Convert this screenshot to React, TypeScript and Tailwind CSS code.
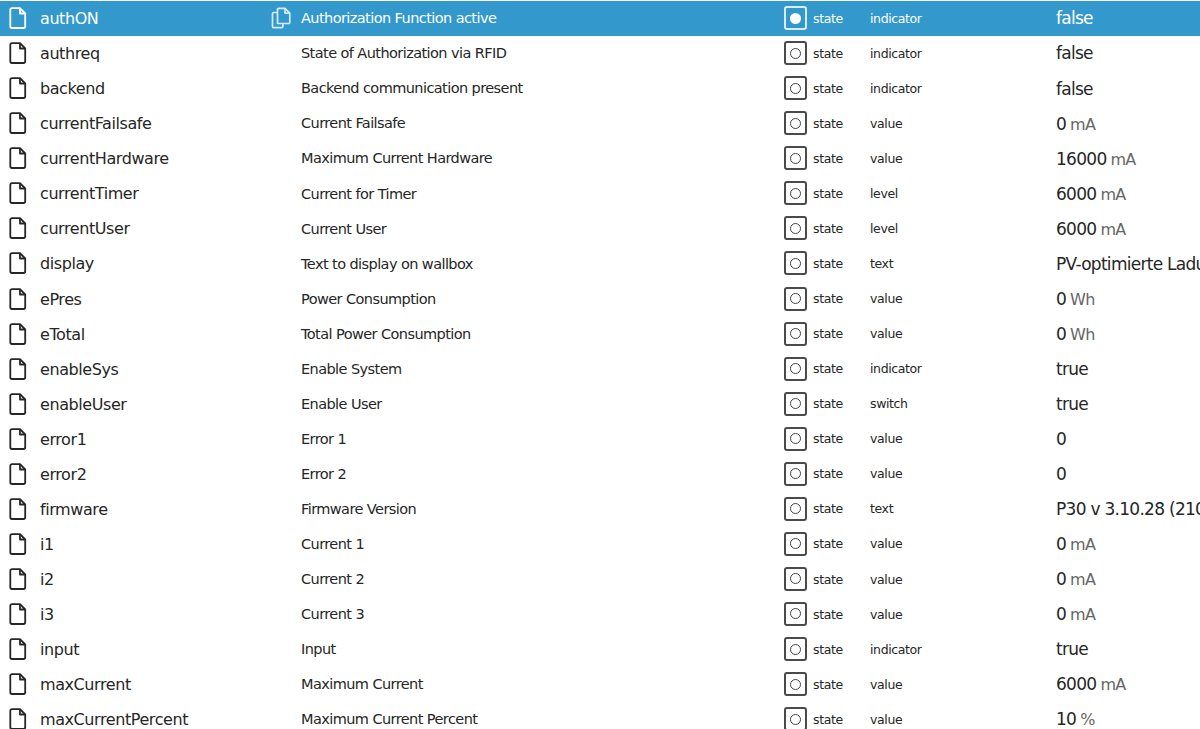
const rows: [string, string, string, string, string?][] = [
  ["authON", "Authorization Function active", "indicator", "false"],
  ["authreq", "State of Authorization via RFID", "indicator", "false"],
  ["backend", "Backend communication present", "indicator", "false"],
  ["currentFailsafe", "Current Failsafe", "value", "0", "mA"],
  ["currentHardware", "Maximum Current Hardware", "value", "16000", "mA"],
  ["currentTimer", "Current for Timer", "level", "6000", "mA"],
  ["currentUser", "Current User", "level", "6000", "mA"],
  ["display", "Text to display on wallbox", "text", "PV-optimierte Ladung"],
  ["ePres", "Power Consumption", "value", "0", "Wh"],
  ["eTotal", "Total Power Consumption", "value", "0", "Wh"],
  ["enableSys", "Enable System", "indicator", "true"],
  ["enableUser", "Enable User", "switch", "true"],
  ["error1", "Error 1", "value", "0"],
  ["error2", "Error 2", "value", "0"],
  ["firmware", "Firmware Version", "text", "P30 v 3.10.28 (210118)"],
  ["i1", "Current 1", "value", "0", "mA"],
  ["i2", "Current 2", "value", "0", "mA"],
  ["i3", "Current 3", "value", "0", "mA"],
  ["input", "Input", "indicator", "true"],
  ["maxCurrent", "Maximum Current", "value", "6000", "mA"],
  ["maxCurrentPercent", "Maximum Current Percent", "value", "10", "%"],
];

function FileIcon() {
  return (
    <svg width="18" height="22" viewBox="0 0 18 22" fill="none" stroke="currentColor" strokeWidth="1.8" strokeLinejoin="round" className="shrink-0">
      <path d="M3 1.200h8l5.200 5.300v12.800a1.700 1.700 0 0 1-1.700 1.700h-11.500a1.700 1.700 0 0 1-1.700-1.700v-16.400a1.700 1.700 0 0 1 1.700-1.700z" />
      <path d="M11 1.200v5.300h5.200" />
    </svg>
  );
}

function CopyIcon() {
  return (
    <svg width="20" height="22" viewBox="0 0 20 22" fill="none" stroke="#d6e9f5" strokeWidth="1.7" strokeLinejoin="round">
      <path d="M6.500 16.500V2.500a1.200 1.200 0 0 1 1.200-1.200h6.300l4.800 4.800v9.200a1.200 1.200 0 0 1-1.200 1.200z" />
      <path d="M14 1.300v4.800h4.800" />
      <path d="M6.500 5.500H2.700a1.200 1.200 0 0 0-1.200 1.200v12.800a1.200 1.200 0 0 0 1.200 1.200h8a1.200 1.200 0 0 0 1.200-1.200v-3" />
    </svg>
  );
}

export default function App() {
  return (
    <div className="w-[1200px] h-[729px] overflow-hidden bg-white pt-[0.65px] text-[#262626] font-['DejaVu_Sans','Liberation_Sans',sans-serif]">
      {rows.map(([name, desc, role, val, unit], i) => {
        const sel = i === 0;
        return (
          <div key={name} className={`flex h-[35.05px] items-center whitespace-nowrap ${sel ? "bg-[#3399cc] text-white" : ""}`}>
            <div className="flex w-[271px] items-center pl-[9px] shrink-0">
              <FileIcon />
              <span className="ml-[13px] pt-[2px] text-[16px] tracking-[-0.42px]">{name}</span>
            </div>
            <div className="w-[30px] shrink-0">{sel && <CopyIcon />}</div>
            <div className="w-[483px] shrink-0 pt-[2px] text-[14.5px] tracking-[-0.58px]">{desc}</div>
            <div className={`flex h-[24px] w-[23px] shrink-0 items-center justify-center rounded-[3px] border-2 ${sel ? "border-[#d9ecf7]" : "border-[#4a4a4a]"}`}>
              <span className={`h-[11px] w-[11px] rounded-full ${sel ? "bg-white" : "border-[1.5px] border-[#444444]"}`} />
            </div>
            <div className="ml-[6px] w-[57px] shrink-0 pt-[2px] text-[12.5px] tracking-[-0.38px]">state</div>
            <div className="w-[186px] shrink-0 pt-[2px] text-[12.5px] tracking-[-0.38px]">{role}</div>
            <div className="pt-[2px] text-[17px] tracking-[-0.72px]">
              {val}
              {unit && <span className={`ml-[4px] text-[16px] ${sel ? "" : "text-[#666666]"}`}>{unit}</span>}
            </div>
          </div>
        );
      })}
    </div>
  );
}
